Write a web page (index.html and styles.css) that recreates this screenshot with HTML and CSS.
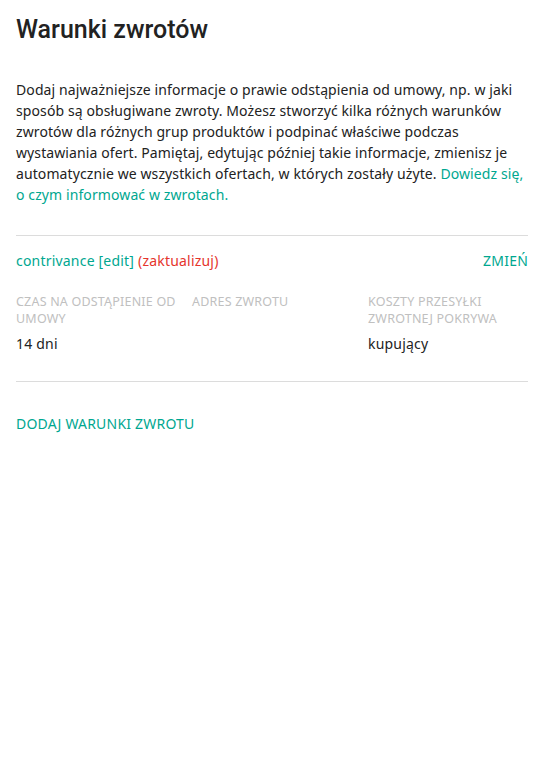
FILE: index.html
```html
<!DOCTYPE html>
<html lang="pl">
<head>
<meta charset="utf-8">
<link rel="stylesheet" href="styles.css">
</head>
<body>
<div class="page">
  <h1 class="title">Warunki zwrotów</h1>
  <p class="intro">Dodaj najważniejsze informacje o prawie odstąpienia od umowy, np. w jaki sposób są obsługiwane zwroty. Możesz stworzyć kilka różnych warunków zwrotów dla różnych grup produktów i podpinać właściwe podczas wystawiania ofert. Pamiętaj, edytując później takie informacje, zmienisz je automatycznie we wszystkich ofertach, w których zostały użyte. <a class="link" href="#">Dowiedz się, o czym informować w zwrotach.</a></p>
  <div class="policy">
    <div class="policy-head">
      <span class="policy-name">contrivance [edit] <span class="update">(zaktualizuj)</span></span>
      <a class="change" href="#">ZMIEŃ</a>
    </div>
    <div class="details">
      <div class="col">
        <div class="label">CZAS NA ODSTĄPIENIE OD UMOWY</div>
        <div class="value">14 dni</div>
      </div>
      <div class="col">
        <div class="label">ADRES ZWROTU</div>
        <div class="value"></div>
      </div>
      <div class="col">
        <div class="label">KOSZTY PRZESYŁKI ZWROTNEJ POKRYWA</div>
        <div class="value">kupujący</div>
      </div>
    </div>
  </div>
  <a class="add" href="#">DODAJ WARUNKI ZWROTU</a>
</div>
</body>
</html>
```

FILE: styles.css
```css
html, body {
  margin: 0;
  padding: 0;
  background: #fff;
}
body {
  font-family: "Noto Sans", "Open Sans", "Liberation Sans", sans-serif;
  color: #222;
  letter-spacing: 0.2px;
}
.page {
  padding: 0 16px;
}
.title {
  font-family: Roboto, "Liberation Sans", sans-serif;
  font-weight: 500;
  font-size: 25px;
  line-height: 32px;
  letter-spacing: 0;
  margin: 0;
  padding-top: 14px;
  color: #222;
}
.intro {
  font-size: 14px;
  line-height: 21px;
  letter-spacing: 0.1px;
  margin: 33px 0 0;
}
.link {
  color: #00a790;
  text-decoration: none;
}
.policy {
  margin-top: 30px;
  border-top: 1px solid #dcdcdc;
  border-bottom: 1px solid #dcdcdc;
  padding: 15px 0 27px;
}
.policy-head {
  display: flex;
  justify-content: space-between;
  font-size: 14px;
  line-height: 20px;
}
.policy-name {
  color: #00a790;
}
.update {
  color: #e5352c;
}
.change {
  color: #00a790;
  text-decoration: none;
}
.details {
  display: grid;
  grid-template-columns: 176px 176px 1fr;
  margin-top: 22px;
}
.label {
  font-size: 12.5px;
  line-height: 17px;
  color: #c0c0c0;
  padding-right: 12px;
}
.value {
  font-size: 14px;
  line-height: 20px;
  margin-top: 7px;
  min-height: 20px;
}
.col {
  display: flex;
  flex-direction: column;
}
.add {
  display: block;
  margin-top: 32px;
  font-size: 14px;
  line-height: 20px;
  color: #00a790;
  text-decoration: none;
}
```
